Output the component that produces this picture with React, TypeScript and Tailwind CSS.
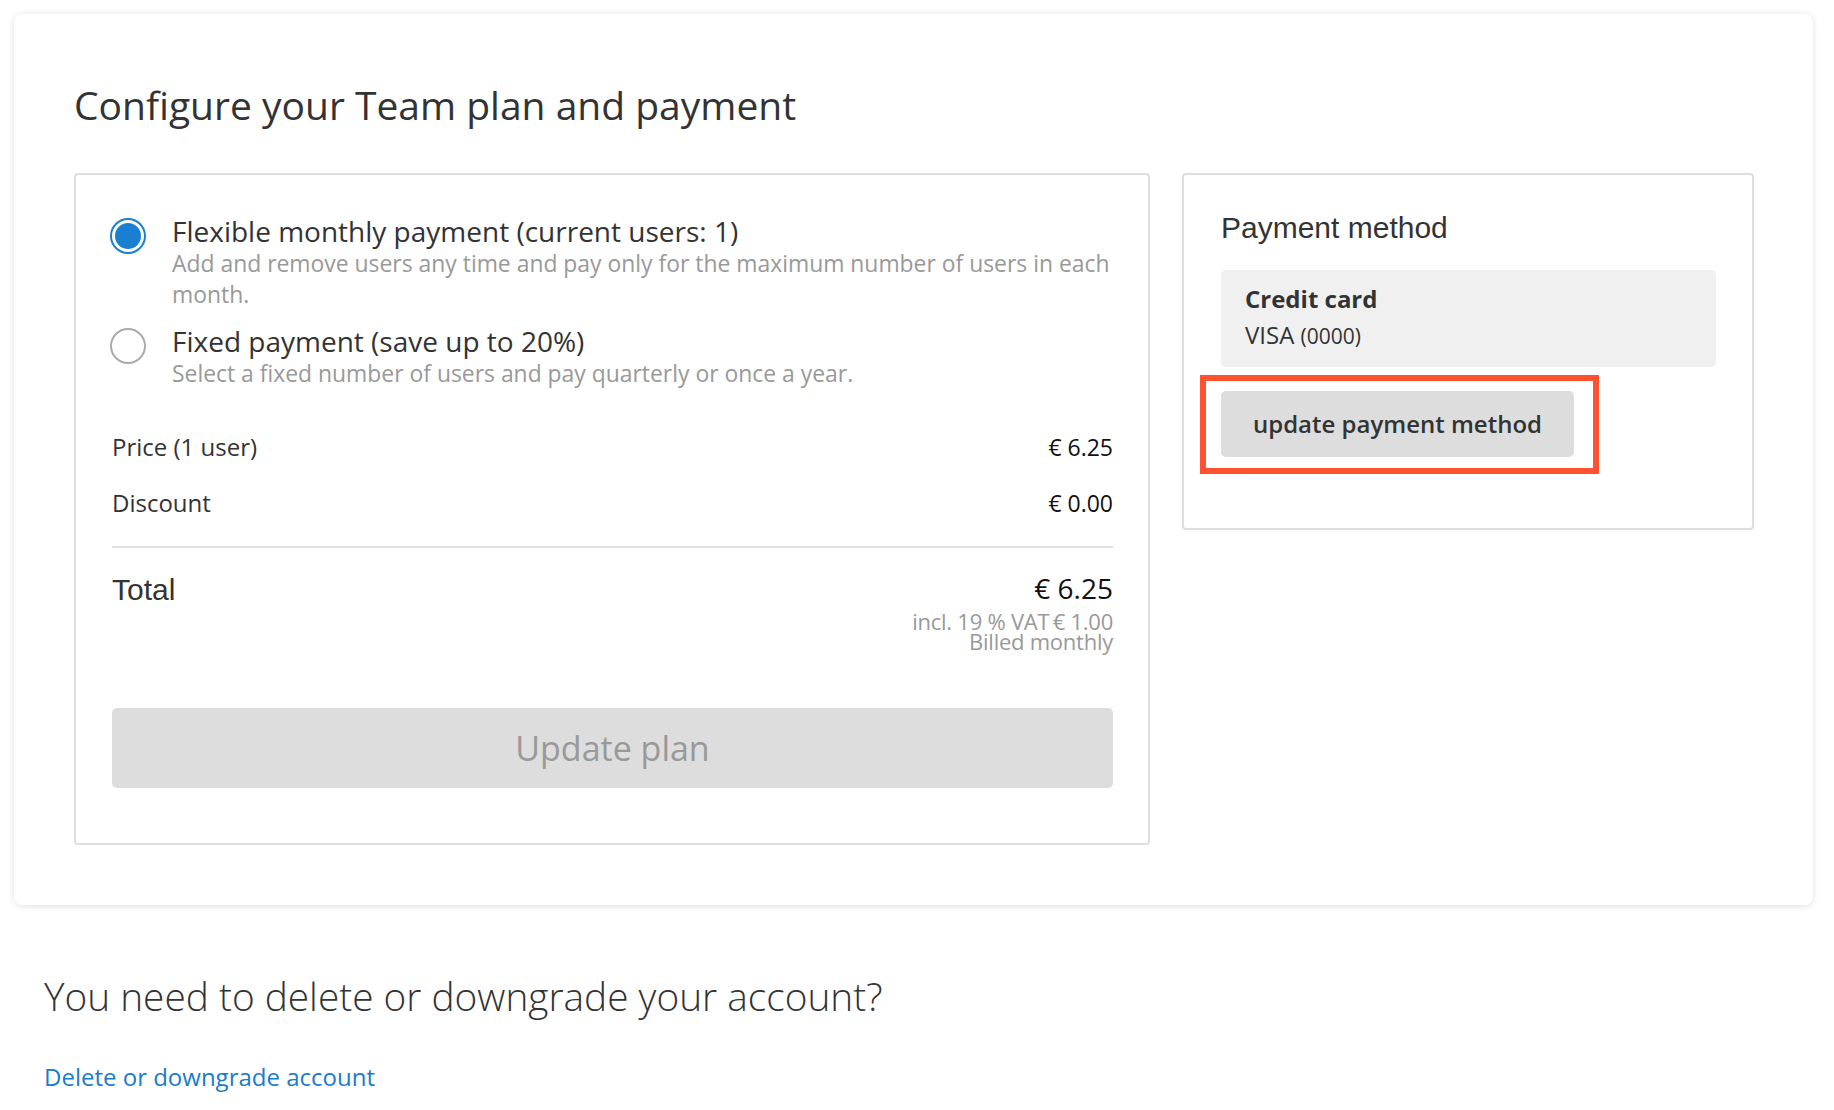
import React from 'react';

const sans = { fontFamily: '"Open Sans", "Liberation Sans", sans-serif' };

interface PlanOption {
  id: string;
  title: string;
  description: string;
}

const options: PlanOption[] = [
  {
    id: 'flexible',
    title: 'Flexible monthly payment (current users: 1)',
    description: 'Add and remove users any time and pay only for the maximum number of users in each month.',
  },
  {
    id: 'fixed',
    title: 'Fixed payment (save up to 20%)',
    description: 'Select a fixed number of users and pay quarterly or once a year.',
  },
];

const Radio = ({ checked }: { checked: boolean }) => (
  <span
    className={
      checked
        ? 'mt-[4px] -ml-[2px] flex h-[36px] w-[36px] shrink-0 items-center justify-center rounded-full border-[2px] border-[#1a7fd1] bg-white'
        : 'mt-[4px] -ml-[2px] block h-[36px] w-[36px] shrink-0 rounded-full border-[2px] border-[#ababab] bg-white'
    }
  >
    {checked && <span className="block h-[26px] w-[26px] rounded-full bg-[#1a7fd1]" />}
  </span>
);

const PlanCard = () => {
  const [selected, setSelected] = React.useState('flexible');

  return (
    <div className="rounded-[4px] border-[2px] border-[#dedede] bg-white pl-[36px] pr-[35px] pt-[39px] pb-[55px]">
      <div className="flex flex-col gap-[14px]">
        {options.map((opt) => (
          <label
            key={opt.id}
            className="flex cursor-pointer items-start gap-[26px]"
            onClick={() => setSelected(opt.id)}
          >
            <Radio checked={selected === opt.id} />
            <div>
              <div className="text-[28px] leading-[34px] text-[#333]">{opt.title}</div>
              <div className="text-[22.9px] leading-[31px] text-[#999]">{opt.description}</div>
            </div>
          </label>
        ))}
      </div>

      <div className="mt-[42px] flex flex-col gap-[24px] text-[24px] leading-[32px] text-[#333]">
        <div className="flex justify-between">
          <span>Price (1 user)</span>
          <span className="text-[23px] text-[#111]">€ 6.25</span>
        </div>
        <div className="flex justify-between">
          <span>Discount</span>
          <span className="text-[23px] text-[#111]">€ 0.00</span>
        </div>
      </div>

      <div className="mt-[27px] h-[2px] bg-[#e0e0e0]" />

      <div className="mt-[23px] flex items-start justify-between">
        <span
          className="mt-[2px] text-[30px] leading-[34px] text-[#333]"
          style={{ fontFamily: '"Liberation Sans", Arial, sans-serif' }}
        >
          Total
        </span>
        <div className="flex flex-col items-end">
          <span className="text-[28px] leading-[34px] text-[#111]">€ 6.25</span>
          <span className="mt-[6px] text-[22px] leading-[20px] tracking-[-0.25px] text-[#999]">
            incl. 19 % VAT{'\u2009'}€ 1.00
          </span>
          <span className="text-[22px] leading-[20px] tracking-[-0.25px] text-[#999]">Billed monthly</span>
        </div>
      </div>

      <button
        disabled
        className="mt-[57px] flex h-[80px] w-full items-center justify-center rounded-[5px] bg-[#dddddd] text-[34px] text-[#999]"
      >
        Update plan
      </button>
    </div>
  );
};

const PaymentCard = () => (
  <div className="rounded-[4px] border-[2px] border-[#dedede] bg-white pl-[37px] pr-[36px] pt-[35px] pb-[71px]">
    <h3
      className="text-[30px] leading-[36px] text-[#333]"
      style={{ fontFamily: '"Liberation Sans", Arial, sans-serif' }}
    >
      Payment method
    </h3>
    <div className="mt-[24px] rounded-[5px] bg-[#f0f0f0] px-[24px] pt-[12px] pb-[14px] text-[#333]">
      <div className="text-[24px] font-bold leading-[34px]">Credit card</div>
      <div className="mt-[2px] text-[24px] leading-[34px]">
        VISA <span className="text-[21px]">(0000)</span>
      </div>
    </div>
    <div className="relative mt-[24px] w-[353px]">
      <button className="flex h-[66px] w-full items-center justify-center rounded-[5px] bg-[#dddddd] text-[24px] font-semibold text-[#333]">
        update payment method
      </button>
      {/* highlight annotation */}
      <div className="pointer-events-none absolute -top-[16px] -bottom-[17px] -left-[21px] -right-[25px] border-[6px] border-[#ff5230]" />
    </div>
  </div>
);

export default function App() {
  return (
    <div className="min-h-[1110px] bg-white" style={sans}>
      <div className="ml-[14px] mt-[14px] w-[1799px] rounded-[8px] bg-white pl-[60px] pr-[59px] pt-[68px] pb-[60px] shadow-[0_1px_7px_rgba(0,0,0,0.13)]">
        <h1 className="text-[39px] leading-[46px] text-[#333]">Configure your Team plan and payment</h1>
        <div className="mt-[45px] grid grid-cols-[1076px_572px] items-start gap-[32px]">
          <PlanCard />
          <PaymentCard />
        </div>
      </div>

      <div className="pl-[44px] pt-[68px]">
        <h2 className="text-[38.8px] font-light leading-[46px] text-[#333]">
          You need to delete or downgrade your account?
        </h2>
        <a href="#" className="mt-[42px] block text-[24px] leading-[32px] text-[#1a7ccc]">
          Delete or downgrade account
        </a>
      </div>
    </div>
  );
}
